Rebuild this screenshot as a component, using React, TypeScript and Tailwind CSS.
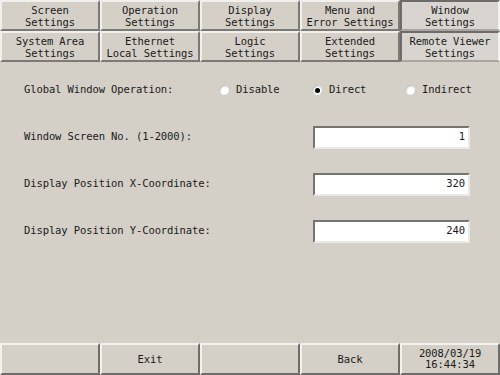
import * as React from "react";

const tabsTop = [
    { label: ["Screen", "Settings"] },
    { label: ["Operation", "Settings"] },
    { label: ["Display", "Settings"] },
    { label: ["Menu and", "Error Settings"] },
    { label: ["Window", "Settings"], active: true },
];

const tabsBottom = [
    { label: ["System Area", "Settings"] },
    { label: ["Ethernet", "Local Settings"] },
    { label: ["Logic", "Settings"] },
    { label: ["Extended", "Settings"] },
    { label: ["Remote Viewer", "Settings"], active: true },
];

const fields = [
    { label: "Window Screen No. (1-2000):", value: "1" },
    { label: "Display Position X-Coordinate:", value: "320" },
    { label: "Display Position Y-Coordinate:", value: "240" },
];

const font = { fontFamily: '"DejaVu Sans Mono", "Liberation Mono", monospace' };

const Tab = ({ label, active }: { label: string[]; active?: boolean }) => (
    <div
        className={`h-[31px] flex flex-col items-center justify-center text-[10.5px] leading-[12px] tracking-[-0.1px] text-[#1a1a1a] border-2 ${
            active
                ? "bg-[#d8d5d0] border-t-[#6e6c68] border-l-[#6e6c68] border-r-[#f4f2ee] border-b-[#a8a5a0]"
                : "bg-[#d4d0c8] border-t-[#f2f0ec] border-l-[#f2f0ec] border-r-[#7c7a76] border-b-[#7c7a76]"
        }`}
    >
        {label.map((l) => (
            <span key={l} className="whitespace-pre">{l}</span>
        ))}
    </div>
);

const Radio = ({ label, checked }: { label: string; checked?: boolean }) => (
    <div className="w-[93px] flex items-center gap-[6px]">
        <div className="w-[12px] h-[12px] rounded-full bg-white border border-[#cfccc6] shadow-[inset_1px_1px_2px_#b3b0aa] flex items-center justify-center">
            {checked && <div className="w-[5px] h-[5px] rounded-full bg-black" />}
        </div>
        <span>{label}</span>
    </div>
);

const FooterButton = ({ children }: { children?: React.ReactNode }) => (
    <div className="h-[32px] flex flex-col items-center justify-center bg-[#d4d0c8] border-2 border-t-[#f4f2ee] border-l-[#f4f2ee] border-r-[#6f6d69] border-b-[#6f6d69] text-[10.5px] leading-[11px] tracking-[-0.1px] text-[#1a1a1a]">
        {children}
    </div>
);

export default function App() {
    return (
        <div className="w-[500px] h-[375px] bg-[#d4d0c8] flex flex-col overflow-hidden" style={font}>
            {/* Tabs */}
            <div className="grid grid-cols-5">
                {tabsTop.map((t) => (
                    <Tab key={t.label.join()} label={t.label} active={t.active} />
                ))}
                {tabsBottom.map((t) => (
                    <Tab key={t.label.join()} label={t.label} active={t.active} />
                ))}
            </div>

            {/* Content */}
            <div className="flex-1 flex flex-col gap-[25px] pt-[17px] pl-[24px] text-[10.5px] tracking-[-0.1px] text-[#1a1a1a]">
                <div className="h-[22px] flex items-center">
                    <span className="w-[194px]">Global Window Operation:</span>
                    <Radio label="Disable" />
                    <Radio label="Direct" checked />
                    <Radio label="Indirect" />
                </div>
                {fields.map((f) => (
                    <div key={f.label} className="h-[22px] flex items-center">
                        <span className="w-[289px]">{f.label}</span>
                        <div className="w-[157px] h-[23px] bg-white border-2 border-t-[#76746f] border-l-[#76746f] border-r-[#ebe9e5] border-b-[#ebe9e5] flex items-center justify-end pr-[3px]">
                            {f.value}
                        </div>
                    </div>
                ))}
            </div>

            {/* Footer */}
            <div className="grid grid-cols-5">
                <FooterButton />
                <FooterButton>Exit</FooterButton>
                <FooterButton />
                <FooterButton>Back</FooterButton>
                <FooterButton>
                    <span>2008/03/19</span>
                    <span>16:44:34</span>
                </FooterButton>
            </div>
        </div>
    );
}
